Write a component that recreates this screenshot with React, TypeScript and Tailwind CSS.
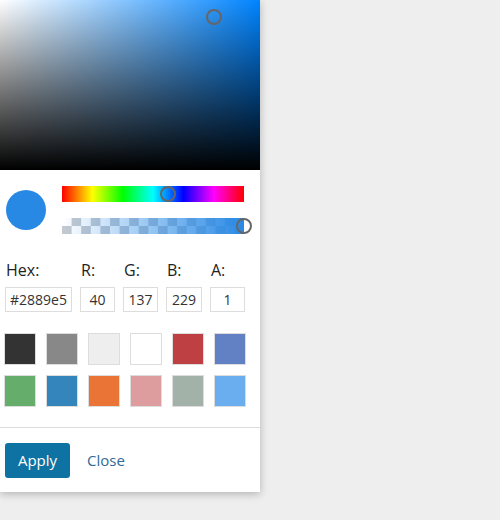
import React from 'react';

const swatches = [
  '#333333', '#888888', '#eeeeee', '#ffffff', '#bf4043', '#6280c4',
  '#65ad6b', '#3385bb', '#e97435', '#dd9d9f', '#a2b2a8', '#6aaeef',
];

const fields = [
  { label: 'Hex:', value: '#2889e5', w: 'w-[67px]' },
  { label: 'R:', value: '40', w: 'w-[35px]' },
  { label: 'G:', value: '137', w: 'w-[35px]' },
  { label: 'B:', value: '229', w: 'w-[36px]' },
  { label: 'A:', value: '1', w: 'w-[35px]' },
];

export default function App() {
  return (
    <div className="min-h-[520px] bg-[#eeeeee] font-['Open_Sans',sans-serif]">
      <div className="w-[260px] bg-white shadow-[0_2px_8px_rgba(0,0,0,0.25)]">
        {/* saturation / value area */}
        <div className="relative h-[170px] bg-[hsl(209,100%,50%)]">
          <div className="absolute inset-0 bg-gradient-to-r from-white to-transparent" />
          <div className="absolute inset-0 bg-gradient-to-b from-transparent to-black" />
          <div className="absolute left-[206px] top-[9px] w-4 h-4 rounded-full border-2 border-[#666]" />
        </div>

        {/* preview + sliders */}
        <div className="flex items-center pl-[6px] pr-[16px] pt-4">
          <div className="w-10 h-10 rounded-full bg-[#2889e5]" />
          <div className="ml-4 flex-1 flex flex-col gap-4">
            <div className="relative h-4 bg-[linear-gradient(to_right,#f00,#ff0,#0f0,#0ff,#00f,#f0f,#f00)]">
              <div className="absolute left-[98px] top-0 w-4 h-4 rounded-full border-2 border-[#666]" />
            </div>
            <div className="relative h-4 bg-[repeating-conic-gradient(#c4c9d0_0%_25%,#ffffff_0%_50%)] bg-[length:19.2px_16px]">
              <div className="absolute inset-0 bg-gradient-to-r from-[rgba(40,137,229,0)] to-[#2889e5]" />
              <div className="absolute left-[174px] top-0 w-4 h-4 rounded-full border-2 border-[#666]" />
            </div>
          </div>
        </div>

        {/* inputs */}
        <div className="flex gap-2 pl-[5px] pt-[24px] text-[#222]">
          {fields.map((f) => (
            <div key={f.label} className={`${f.w} flex flex-col`}>
              <span className="pl-px text-[16px] leading-6 mb-[5px]">{f.label}</span>
              <div className="h-[25px] border border-[#dddddd] flex items-center justify-center text-[14px] text-[#333]">
                {f.value}
              </div>
            </div>
          ))}
        </div>

        {/* swatches */}
        <div className="grid grid-cols-6 gap-x-[10px] gap-y-[10px] w-fit pl-[4px] pt-[21px] pb-[20px]">
          {swatches.map((c) => (
            <div key={c} className="w-8 h-8 border border-[#dddddd]" style={{ backgroundColor: c }} />
          ))}
        </div>

        {/* footer */}
        <div className="border-t border-[#dddddd] flex items-center gap-[17px] px-[5px] pt-[15px] pb-[14px]">
          <button className="w-[65px] h-[35px] rounded-[3px] bg-[#0e72a2] text-white text-[15px]">Apply</button>
          <button className="text-[15px] text-[#2f6a95]">Close</button>
        </div>
      </div>
    </div>
  );
}
